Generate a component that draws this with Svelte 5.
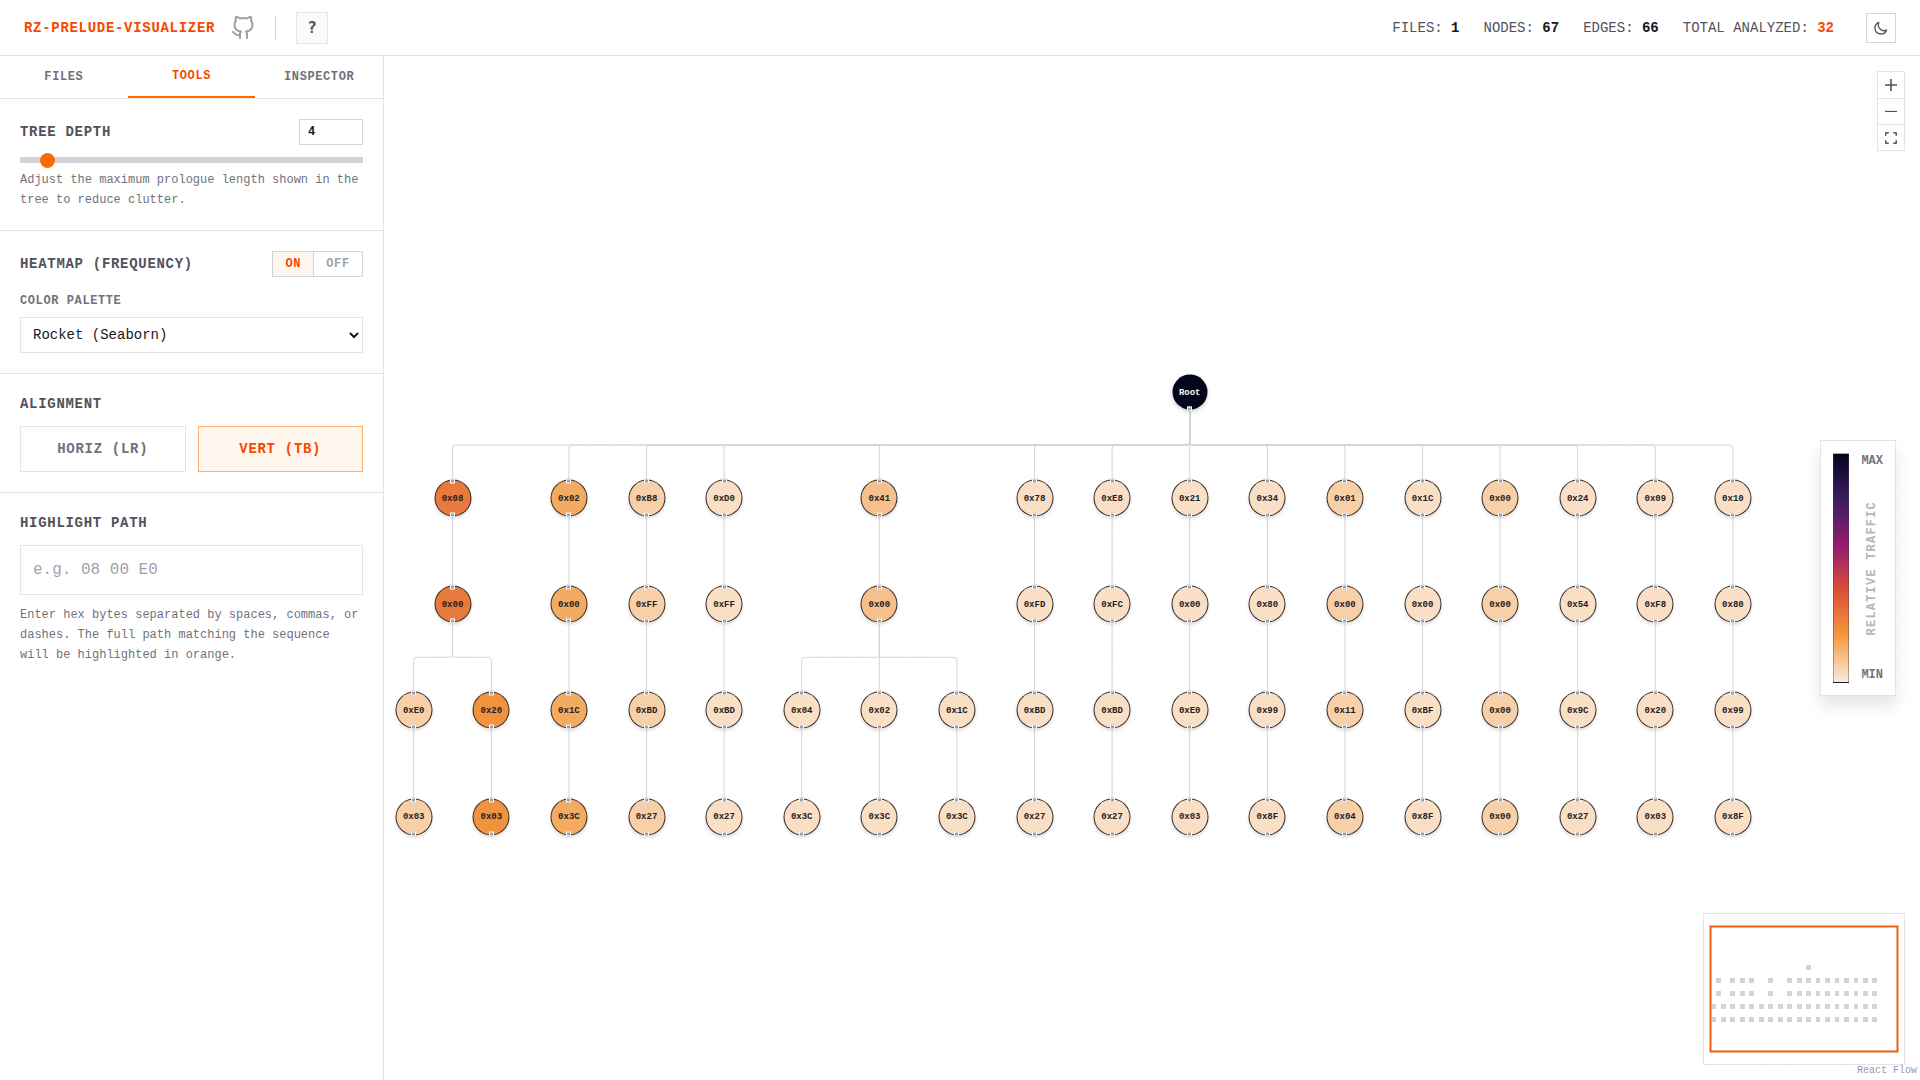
<script lang="ts">
	const zoom = 0.5706;
	const colGap = 136;
	const rowGap = 186;
	const radius = 30;
	const dotGap = 20 * zoom;
	const originX = 29.7;
	const originY = 336;

	type TreeNode = { id: string; label: string; col: number; row: number; heat: number; parent: string | null };

	// relative traffic, from rarest to most frequent
	const palette = ['#f9dfc6', '#f7d0aa', '#f5c08c', '#f3aa61', '#f1923e', '#e97a3d', '#03051a'];

	// [column, heat, labels of level 1 to 4]
	const branches: [number, number, string[]][] = [
		[0.5, 5, ['08', '00']],
		[2, 3, ['02', '00', '1C', '3C']],
		[3, 1, ['B8', 'FF', 'BD', '27']],
		[4, 0, ['D0', 'FF', 'BD', '27']],
		[6, 2, ['41', '00']],
		[8, 0, ['78', 'FD', 'BD', '27']],
		[9, 0, ['E8', 'FC', 'BD', '27']],
		[10, 0, ['21', '00', 'E0', '03']],
		[11, 0, ['34', '80', '99', '8F']],
		[12, 1, ['01', '00', '11', '04']],
		[13, 0, ['1C', '00', 'BF', '8F']],
		[14, 1, ['00', '00', '00', '00']],
		[15, 0, ['24', '54', '9C', '27']],
		[16, 0, ['09', 'F8', '20', '03']],
		[17, 0, ['10', '80', '99', '8F']]
	];

	// [column, heat, column of the parent, labels of level 3 and 4]
	const forks: [number, number, number, string[]][] = [
		[0, 1, 0.5, ['E0', '03']],
		[1, 4, 0.5, ['20', '03']],
		[5, 0, 6, ['04', '3C']],
		[6, 0, 6, ['02', '3C']],
		[7, 0, 6, ['1C', '3C']]
	];

	const nodes: TreeNode[] = [{ id: 'root', label: 'Root', col: 10, row: 0, heat: 6, parent: null }];

	function addChain(col: number, heat: number, firstRow: number, labels: string[], parent: string) {
		labels.forEach((label, i) => {
			const row = firstRow + i;
			const id = `${col}-${row}`;
			nodes.push({ id, label: `0x${label}`, col, row, heat, parent });
			parent = id;
		});
	}

	for (const [col, heat, labels] of branches) addChain(col, heat, 1, labels, 'root');
	for (const [col, heat, from, labels] of forks) addChain(col, heat, 3, labels, `${from}-2`);

	const byId = new Map(nodes.map((n) => [n.id, n]));
	const edges = nodes.filter((n) => n.parent).map((n) => ({ id: n.id, d: edgePath(byId.get(n.parent!)!, n) }));

	function px(n: TreeNode) {
		return originX + n.col * colGap * zoom;
	}

	function py(n: TreeNode) {
		return originY + n.row * rowGap * zoom;
	}

	function edgePath(a: TreeNode, b: TreeNode) {
		const x1 = px(a);
		const x2 = px(b);
		const y1 = py(a) + radius * zoom;
		const y2 = py(b) - radius * zoom;
		if (x1 === x2) return `M${x1} ${y1}V${y2}`;
		const mid = (y1 + y2) / 2;
		const r = 3;
		const dir = x2 > x1 ? r : -r;
		return `M${x1} ${y1}V${mid - r}Q${x1} ${mid} ${x1 + dir} ${mid}H${x2 - dir}Q${x2} ${mid} ${x2} ${mid + r}V${y2}`;
	}

	const tabs = ['Files', 'Tools', 'Inspector'];
	let activeTab = $state('Tools');
	let depth = $state(4);
	let heatmap = $state(true);
	let selectedPalette = $state('rocket');
	let alignment = $state('TB');
	let highlight = $state('');
</script>

<div class="app">
	<header>
		<h1>RZ-PRELUDE-VISUALIZER</h1>
		<a class="github" href="#github" aria-label="GitHub repository">
			<svg width="24" height="24" viewBox="0 0 24 24" fill="none" stroke="currentColor" stroke-width="2" stroke-linecap="round" stroke-linejoin="round">
				<path d="M9 19c-5 1.5-5-2.5-7-3m14 6v-3.87a3.37 3.37 0 0 0-.94-2.61c3.14-.35 6.44-1.54 6.44-7A5.44 5.44 0 0 0 20 4.77 5.07 5.07 0 0 0 19.91 1S18.73.65 16 2.48a13.38 13.38 0 0 0-7 0C6.27.65 5.09 1 5.09 1A5.07 5.07 0 0 0 5 4.77a5.44 5.44 0 0 0-1.5 3.78c0 5.42 3.3 6.61 6.44 7A3.37 3.37 0 0 0 9 18.13V22" />
			</svg>
		</a>
		<span class="divider"></span>
		<button class="help">?</button>
		<div class="stats">
			<span>FILES: <b>1</b></span>
			<span>NODES: <b>67</b></span>
			<span>EDGES: <b>66</b></span>
			<span>TOTAL ANALYZED: <b class="accent">32</b></span>
		</div>
		<button class="theme" aria-label="Toggle dark mode">
			<svg width="16" height="16" viewBox="0 0 24 24" fill="none" stroke="currentColor" stroke-width="2" stroke-linecap="round" stroke-linejoin="round">
				<path d="M20.354 15.354A9 9 0 0 1 8.646 3.646 9.003 9.003 0 0 0 12 21a9.003 9.003 0 0 0 8.354-5.646z" />
			</svg>
		</button>
	</header>

	<div class="body">
		<aside>
			<nav>
				{#each tabs as tab}
					<button class:active={activeTab === tab} onclick={() => (activeTab = tab)}>{tab}</button>
				{/each}
			</nav>

			<section>
				<div class="row">
					<label class="title" for="depth">Tree Depth</label>
					<input id="depth" class="number" type="number" min="1" max="50" bind:value={depth} />
				</div>
				<input class="slider" type="range" min="1" max="50" aria-label="Tree depth" bind:value={depth} />
				<p>Adjust the maximum prologue length shown in the tree to reduce clutter.</p>
			</section>

			<section>
				<div class="row">
					<span class="title">Heatmap (Frequency)</span>
					<div class="toggle">
						<button class:on={heatmap} onclick={() => (heatmap = true)}>ON</button>
						<button class:on={!heatmap} onclick={() => (heatmap = false)}>OFF</button>
					</div>
				</div>
				<label class="subtitle" for="palette">Color Palette</label>
				<select id="palette" bind:value={selectedPalette}>
					<option value="rocket">Rocket (Seaborn)</option>
					<option value="viridis">Viridis</option>
				</select>
			</section>

			<section>
				<span class="title">Alignment</span>
				<div class="choices">
					<button class:on={alignment === 'LR'} onclick={() => (alignment = 'LR')}>HORIZ (LR)</button>
					<button class:on={alignment === 'TB'} onclick={() => (alignment = 'TB')}>VERT (TB)</button>
				</div>
			</section>

			<section class="last">
				<label class="title" for="highlight">Highlight Path</label>
				<input id="highlight" class="path" type="text" placeholder="e.g. 08 00 E0" bind:value={highlight} />
				<p>Enter hex bytes separated by spaces, commas, or dashes. The full path matching the sequence will be highlighted in orange.</p>
			</section>
		</aside>

		<main>
			<svg class="edges">
				<defs>
					<pattern id="dots" x={originX - 18.5} y="-8" width={dotGap} height={dotGap} patternUnits="userSpaceOnUse">
						<circle cx={dotGap / 2} cy={dotGap / 2} r="0.3" />
					</pattern>
				</defs>
				<rect width="100%" height="100%" fill="url(#dots)" />
				{#each edges as edge (edge.id)}
					<path d={edge.d} />
				{/each}
			</svg>

			{#each nodes as node (node.id)}
				<div
					class="node"
					class:root={node.row === 0}
					style="left: {px(node)}px; top: {py(node)}px; background: {palette[node.heat]}"
				>
					{#if node.row > 0}<i class="handle top"></i>{/if}
					{node.label}
					<i class="handle bottom"></i>
				</div>
			{/each}

			<div class="controls">
				<button aria-label="Zoom in">
					<svg width="12" height="12" viewBox="0 0 32 32"><path d="M32 18.133H18.133V32h-4.266V18.133H0v-4.266h13.867V0h4.266v13.867H32z" /></svg>
				</button>
				<button aria-label="Zoom out">
					<svg width="12" height="12" viewBox="0 0 32 32"><path d="M0 13h32v3H0z" /></svg>
				</button>
				<button aria-label="Fit view">
					<svg width="12" height="12" viewBox="0 0 32 32">
						<path d="M0 10V3Q0 0 3 0h7v4H4v6zM22 0h7q3 0 3 3v7h-4V4h-6zM32 22v7q0 3-3 3h-7v-4h6v-6zM10 32H3q-3 0-3-3v-7h4v6h6z" />
					</svg>
				</button>
			</div>

			<div class="legend">
				<div class="ramp"></div>
				<div class="scale">
					<span>MAX</span>
					<span class="caption">RELATIVE TRAFFIC</span>
					<span>MIN</span>
				</div>
			</div>

			<svg class="minimap" width="202" height="152" viewBox="0 0 200 150" role="img" aria-label="Mini map">
				{#each nodes as node (node.id)}
					<rect x={7.5 + node.col * 9.47} y={51 + node.row * 13} width="4.8" height="5" shape-rendering="crispEdges" />
				{/each}
				<rect class="view" x="6.5" y="12.5" width="187" height="125" />
			</svg>
			<a class="attribution" href="https://reactflow.dev">React Flow</a>
		</main>
	</div>
</div>

<style>
	:global(body) {
		margin: 0;
	}
	.app {
		display: flex;
		flex-direction: column;
		height: 100vh;
		background: #fff;
		color: #18181b;
		font-family: 'Liberation Mono', monospace;
		font-size: 14px;
		line-height: 20px;
	}
	.app :global(*) {
		box-sizing: border-box;
	}
	button,
	input,
	select {
		margin: 0;
		font-family: inherit;
		border-radius: 0;
	}
	button {
		padding: 0;
		cursor: pointer;
	}
	svg {
		display: block;
	}

	header {
		display: flex;
		align-items: center;
		height: 56px;
		padding: 0 24px;
		border-bottom: 1px solid #e4e4e7;
	}
	h1 {
		margin: 0;
		font-size: 14px;
		font-weight: 700;
		letter-spacing: 0.7px;
		color: #f54900;
	}
	.github {
		margin-left: 16px;
		color: #9f9fa9;
	}
	.divider {
		width: 1px;
		height: 24px;
		margin: 0 20px;
		background: #d4d4d8;
	}
	.help {
		width: 32px;
		height: 32px;
		border: 1px solid #e4e4e7;
		background: #fafafa;
		color: #52525c;
		font-family: 'DejaVu Sans Mono', monospace;
		font-size: 16px;
		font-weight: 700;
	}
	.stats {
		display: flex;
		gap: 24px;
		margin-left: auto;
		color: #52525c;
	}
	.stats b {
		color: #18181b;
	}
	.stats .accent {
		color: #f54900;
	}
	.theme {
		display: grid;
		place-items: center;
		width: 30px;
		height: 30px;
		margin-left: 32px;
		border: 1px solid #d4d4d8;
		background: #fff;
		color: #52525c;
	}

	.body {
		display: flex;
		flex: 1;
		min-height: 0;
	}
	aside {
		width: 384px;
		flex: none;
		border-right: 1px solid #e4e4e7;
		background: #fff;
	}
	nav {
		display: flex;
		height: 43px;
		border-bottom: 1px solid #e4e4e7;
	}
	nav button {
		flex: 1;
		border: 0;
		background: none;
		color: #71717b;
		font-size: 12px;
		font-weight: 700;
		letter-spacing: 0.6px;
		text-transform: uppercase;
	}
	nav .active {
		border-bottom: 2px solid #ff6900;
		color: #f54900;
	}
	section {
		display: flex;
		flex-direction: column;
		padding: 20px;
		border-bottom: 1px solid #e4e4e7;
	}
	section.last {
		border-bottom: 0;
	}
	.row {
		display: flex;
		align-items: center;
		justify-content: space-between;
	}
	.title {
		color: #52525c;
		font-weight: 700;
		letter-spacing: 0.7px;
		text-transform: uppercase;
	}
	.number {
		width: 64px;
		height: 26px;
		padding: 0 8px;
		border: 1px solid #d4d4d8;
		background: #fff;
		color: #18181b;
		font-size: 12px;
		font-weight: 700;
	}
	.slider {
		appearance: none;
		width: 100%;
		height: 6px;
		margin: 12px 0 7px;
		background: #d4d4d8;
	}
	.slider::-webkit-slider-thumb {
		appearance: none;
		width: 15px;
		height: 15px;
		border-radius: 50%;
		background: #ff6900;
	}
	p {
		margin: 0;
		color: #71717b;
		font-size: 12px;
		line-height: 20px;
	}
	.toggle {
		display: flex;
		border: 1px solid #d4d4d8;
	}
	.toggle button {
		height: 24px;
		padding: 0 12px;
		border: 0;
		background: #fff;
		color: #9f9fa9;
		font-size: 12px;
		font-weight: 700;
		letter-spacing: 0.6px;
	}
	.toggle button + button {
		min-width: 49px;
		border-left: 1px solid #d4d4d8;
	}
	.toggle button.on {
		background: #fff7ed;
		color: #f54900;
	}
	.subtitle {
		margin: 14px 0 6px;
		color: #71717b;
		font-size: 12px;
		font-weight: 700;
		letter-spacing: 0.6px;
		text-transform: uppercase;
	}
	select {
		height: 36px;
		padding: 0 8px;
		border: 1px solid #e4e4e7;
		background: #fff;
		color: #18181b;
		font-size: 14px;
	}
	.choices {
		display: flex;
		gap: 12px;
		margin-top: 12px;
	}
	.choices button {
		flex: 1;
		height: 46px;
		border: 1px solid #e4e4e7;
		background: #fff;
		color: #71717b;
		font-size: 14px;
		font-weight: 700;
		letter-spacing: 0.7px;
	}
	.choices button.on {
		border-color: #ffae70;
		background: #fff6ed;
		color: #f54900;
	}
	.path {
		height: 50px;
		margin: 12px 0 10px;
		padding: 0 12px;
		border: 1px solid #e4e4e7;
		font-size: 16px;
	}
	.path::placeholder {
		color: #9f9fa9;
	}

	main {
		position: relative;
		flex: 1;
		min-width: 0;
		overflow: hidden;
		background: #fff;
	}
	.edges {
		position: absolute;
		inset: 0;
		width: 100%;
		height: 100%;
	}
	.edges circle {
		fill: #d4d4d8;
	}
	.edges path {
		fill: none;
		stroke: #d4d4d8;
		stroke-width: 1px;
	}
	.node {
		position: absolute;
		display: grid;
		place-items: center;
		width: 35px;
		height: 35px;
		transform: translate(-50%, -50%);
		border-radius: 50%;
		box-shadow: 0 0 0 1px #352a24, 0 2px 4px rgba(0, 0, 0, 0.2);
		color: #27201c;
		font-size: 9px;
		font-weight: 700;
		line-height: 12px;
	}
	.node.root {
		box-shadow: 0 2px 4px rgba(0, 0, 0, 0.2);
		color: #fff;
	}
	.handle {
		position: absolute;
		left: 50%;
		width: 5px;
		height: 5px;
		transform: translateX(-50%);
		border: 1px solid #fff;
		background: #9f9fa9;
	}
	.handle.top {
		top: -2px;
	}
	.handle.bottom {
		bottom: -2px;
	}

	.controls {
		position: absolute;
		top: 15px;
		right: 15px;
		border: 1px solid #e4e4e7;
	}
	.controls button {
		display: grid;
		place-items: center;
		width: 26px;
		height: 26px;
		border: 0;
		background: #fff;
		fill: #52525c;
	}
	.controls button + button {
		border-top: 1px solid #e4e4e7;
	}
	.legend {
		position: absolute;
		top: 384px;
		right: 24px;
		display: flex;
		gap: 12px;
		padding: 12px;
		border: 1px solid #e4e4e7;
		background: #fff;
		box-shadow: 0 10px 15px rgba(0, 0, 0, 0.1);
	}
	.ramp {
		width: 16px;
		height: 230px;
		border: 1px solid rgba(63, 63, 70, 0.4);
		background: linear-gradient(to top, #faebdd, #f6993f 20%, #de4f3a 40%, #921c6d 60%, #3f1c63 80%, #03051a);
	}
	.scale {
		display: flex;
		flex-direction: column;
		align-items: center;
		justify-content: space-between;
		color: #71717b;
		font-size: 12px;
		font-weight: 700;
		line-height: 16px;
	}
	.caption {
		writing-mode: vertical-rl;
		rotate: 180deg;
		color: #b5b5bd;
		letter-spacing: 1.2px;
	}
	.minimap {
		position: absolute;
		right: 15px;
		bottom: 15px;
		border: 1px solid #e4e4e7;
		background: #fff;
		fill: #d4d4d8;
	}
	.minimap .view {
		fill: none;
		stroke: #f2600f;
		stroke-width: 2px;
	}
	.attribution {
		position: absolute;
		right: 3px;
		bottom: 2px;
		color: #999;
		font-size: 10px;
		line-height: 14px;
		text-decoration: none;
	}
</style>
